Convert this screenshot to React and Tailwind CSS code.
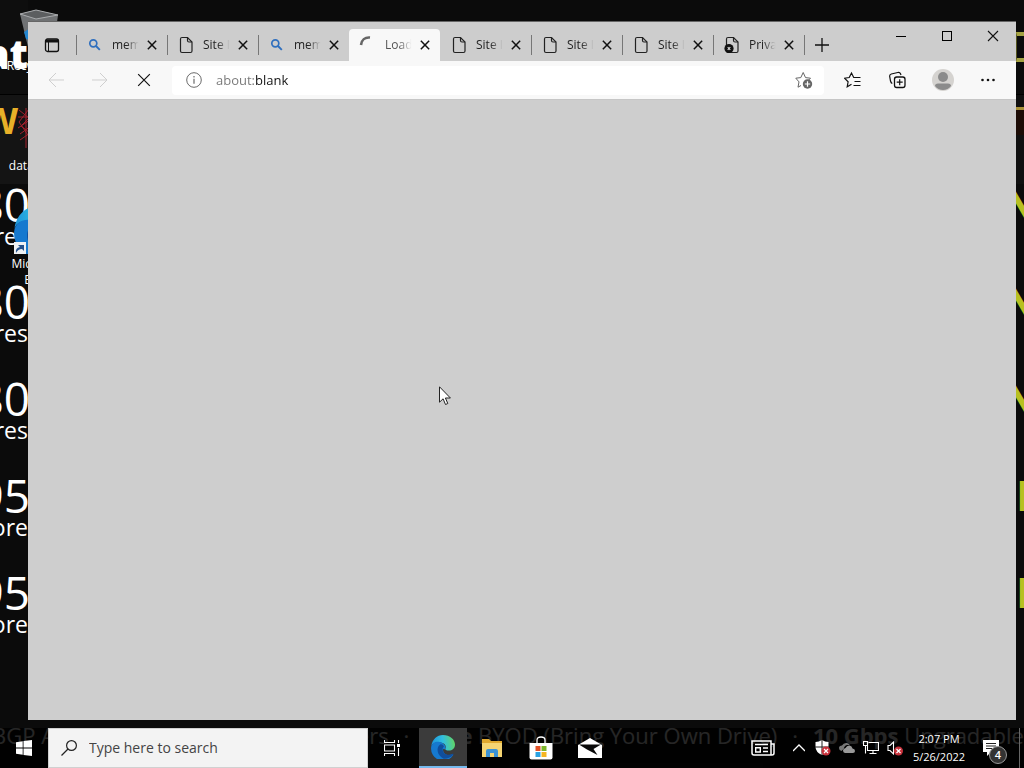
import { useState } from 'react';

const initialTabs = [
    { id: 1, title: 'memz', icon: 'search' },
    { id: 2, title: 'Site Map', icon: 'page' },
    { id: 3, title: 'memz', icon: 'search' },
    { id: 4, title: 'Loading', icon: 'loading' },
    { id: 5, title: 'Site I', icon: 'page' },
    { id: 6, title: 'Site I', icon: 'page' },
    { id: 7, title: 'Site I', icon: 'page' },
    { id: 8, title: 'Privacy', icon: 'blocked' },
];

const plans = [
    { id: 1, price: '80', unit: 'Cores', badge: 'justify-center' },
    { id: 2, price: '80', unit: 'Cores', badge: 'justify-center' },
    { id: 3, price: '80', unit: 'Cores', badge: 'justify-center' },
    { id: 4, price: '95', unit: 'Core', badge: 'justify-start' },
    { id: 5, price: '95', unit: 'Core', badge: 'justify-start' },
];

const Svg = ({ className = 'w-4 h-4', box = '0 0 16 16', children }) => (
    <svg className={className} viewBox={box} fill="none" stroke="currentColor" aria-hidden="true">
        {children}
    </svg>
);

const Cross = ({ className, width = 1.2 }) => (
    <Svg className={className} box="0 0 12 12">
        <path d="M1 1l10 10M11 1L1 11" strokeWidth={width} />
    </Svg>
);

const TabIcon = ({ name }) => {
    if (name === 'search') {
        return (
            <Svg className="w-4 h-4 text-[#2f6fbe]">
                <circle cx="5.3" cy="6.3" r="3.5" strokeWidth="1.7" />
                <path d="M8 9l3.8 3.8" strokeWidth="1.9" />
            </Svg>
        );
    }
    if (name === 'loading') {
        return (
            <Svg className="w-4 h-4 overflow-visible text-[#666]">
                <path d="M0 8C.5 3 4 0 9 .5" strokeWidth="2.6" />
            </Svg>
        );
    }
    return (
        <Svg className="w-4 h-4 overflow-visible text-[#222]">
            <path d="M3 .5h5.500l4.500 4.500v9q0 1.500-1.500 1.500h-8.500q-1.500 0-1.500-1.500v-12q0-1.500 1.500-1.500z" strokeWidth="1.200" />
            <path d="M8.500 .5v3q0 1.500 1.500 1.500h3" strokeWidth="1.200" />
            {name === 'blocked' && (
                <>
                    <circle cx="4" cy="11.500" r="4.600" fill="#111" stroke="none" />
                    <path d="M2.700 10.200l2.600 2.600M5.300 10.200l-2.600 2.600" stroke="#ddd" strokeWidth="1.100" />
                </>
            )}
        </Svg>
    );
};

const Wallpaper = () => (
    <div className="absolute inset-0 flex flex-col overflow-hidden text-white" aria-hidden="true">
        <div className="flex flex-1 min-h-0 justify-between">
            <div className="w-7 overflow-hidden">
                <div className="flex h-[95px] items-end justify-end border-b border-black bg-[#0e0e0e] pb-5 text-[40px] font-extrabold leading-10">
                    <span>at</span>
                </div>
                <div className="flex h-[89px] justify-end bg-[#141414] pt-1.5 pr-2.5 text-[36px] font-bold leading-10 text-[#e8b028]">
                    <span>W</span>
                </div>
                {plans.map((plan) => (
                    <div key={plan.id} className="-mr-0.5 flex h-[97px] flex-col items-end">
                        <span className="text-[46px] leading-10">{plan.price}</span>
                        <span className="pr-0.5 text-[23px] leading-6">{plan.unit}</span>
                    </div>
                ))}
            </div>
            <div className="w-2 overflow-hidden">
                <div className="h-[95px] border-b border-black pt-8">
                    <div className="h-[30px] w-full border-y-4 border-l border-y-[#a5a242] border-l-[#55551f]"></div>
                </div>
                <div className="h-[89px] bg-[#101010] pt-3">
                    <div className="h-7 w-full border-t-3 border-[#a89038] bg-[#1c0c06]"></div>
                </div>
                {plans.map((plan) => (
                    <div key={plan.id} className={`flex h-[97px] text-[42px] font-bold leading-10 text-[#b7c021] ${plan.badge}`}>
                        <span>N</span>
                    </div>
                ))}
            </div>
        </div>
        <div className="-ml-2 flex h-[50px] items-center justify-between pb-4 text-[22px] leading-8 whitespace-nowrap">
            <span>BGP Available</span>
            <span>·</span>
            <span><b>All</b> Dedicated Servers</span>
            <span>·</span>
            <span><b>Free</b> BYOD (Bring Your Own Drive)</span>
            <span>·</span>
            <span><b>10 Gbps</b> Upgradable</span>
        </div>
    </div>
);

const DesktopIcons = () => (
    <div className="absolute top-2 left-0 flex w-[76px] flex-col items-center text-center text-xs leading-4 text-white">
        <svg className="h-12 w-12" viewBox="0 0 48 48" aria-hidden="true">
            <path d="M6 6L22 2l22 5-5 37-23 3z" fill="#707274" />
            <path d="M6 6L22 2l22 5-22 4z" fill="#5c5e60" stroke="#a9abad" />
            <path d="M10 24l8-5 2 14-8-2z" fill="#2385cf" />
        </svg>
        <span className="mt-0.5">Recycle Bin</span>
        <svg className="mt-8 h-12 w-12" viewBox="0 0 48 48" fill="none" stroke="#a3202c" aria-hidden="true">
            <path d="M5 4l10 8-8 8 9 7-10 7M15 3L5 16l11 16M4 11h13M4 22l12-8M12 2v40M6 28l11-8" strokeWidth="1" />
        </svg>
        <span className="mt-1">database1</span>
        <div className="relative mt-8 h-12 w-12">
            <EdgeLogo className="h-12 w-12" />
            <svg className="absolute bottom-0 left-0 h-3 w-3" viewBox="0 0 12 12" aria-hidden="true">
                <path d="M0 0h12v12H0z" fill="#eef1f4" />
                <path d="M2 11q-1-5 4-6l-2-2h6v6l-2-2q-4 0-6 4z" fill="#24518c" />
            </svg>
        </div>
        <span className="mt-0.5">Microsoft Edge</span>
    </div>
);

const EdgeLogo = ({ className }) => (
    <svg className={className} viewBox="0 0 24 24" aria-hidden="true">
        <defs>
            <linearGradient id="edgeTop" x1="0" y1="0.5" x2="1" y2="0.4">
                <stop offset="0" stopColor="#1d94dc" />
                <stop offset="0.5" stopColor="#31bde0" />
                <stop offset="1" stopColor="#62d663" />
            </linearGradient>
        </defs>
        <path d="M.3 11C1.200 4.500 6 0 12 0c7 0 12 4.500 12 9.600 0 4-3 6-6 6-2.700 0-4-.9-3.700-1.800.8-1 .9-4.300-2.300-5.600C8 6.500 2 7 .3 11z" fill="url(#edgeTop)" />
        <path d="M.1 12.500C.5 8 5 6.200 8.500 7c4 .8 6.200 3.500 5.900 5.900-.3 1.600-.3 1.500-2.400 1.100-.2 5 4.500 7.500 8.500 5.600 1.300-.7 2.200-.1 1.400.9A12 12 0 0 1 .1 12.500z" fill="#1679cf" />
        <path d="M9.200 9.500c-4.500 2.800-3.200 11.200 3.500 14.200 4.400 0 8-1.500 9.700-4.200.3-.7-.2-1-.9-.7-4.500 2.400-9.300.2-9.800-3.800-.2-2 .3-2.500 1.200-3.300-.7-1.800-2-2.700-3.700-2.200z" fill="#104e9c" />
    </svg>
);

const Browser = () => {
    const [activeTab, setActiveTab] = useState(4);
    const [url, setUrl] = useState('about:blank');
    const toolButton = 'flex w-11 h-8 items-center justify-center';

    return (
        <section className="absolute top-[21px] right-2 bottom-12 left-7 flex flex-col border-t border-[#666] bg-[#cecece] text-[#111]">
            {/* Tab strip */}
            <div className="flex h-[39px] shrink-0 items-end bg-[#cdcdcd]">
                <button className="flex h-8 w-12 items-center justify-center" aria-label="Tab actions">
                    <Svg className="w-4 h-4">
                        <rect x="1.500" y="2" width="13" height="12.500" rx="2" strokeWidth="1.300" />
                        <path d="M2 4h12" strokeWidth="3" />
                        <path d="M4.500 4v10" />
                    </Svg>
                </button>
                {initialTabs.map((tab) => {
                    const active = tab.id === activeTab;
                    return (
                        <div
                            key={tab.id}
                            className={`relative flex h-8 w-[91px] items-center pl-3 ${active ? 'rounded-t bg-[#f8f8f8]' : ''}`}
                        >
                            {!active && tab.id !== activeTab + 1 && (
                                <span className="absolute top-1.5 left-0 h-5 w-px bg-[#777]"></span>
                            )}
                            <button className="flex items-center gap-2" onClick={() => setActiveTab(tab.id)}>
                                <TabIcon name={tab.icon} />
                                <span
                                    className={`w-7 overflow-hidden text-left text-xs leading-4 whitespace-nowrap [mask-image:linear-gradient(to_right,#000_50%,transparent_95%)] ${active ? 'text-[#555]' : 'text-[#222]'}`}
                                >
                                    {tab.title}
                                </span>
                            </button>
                            <button className="flex h-5 w-6 items-center justify-center" aria-label="Close tab">
                                <Cross className="w-2.5 h-2.5" width={1.8} />
                            </button>
                        </div>
                    );
                })}
                <button className="relative flex h-8 w-9 items-center justify-center" aria-label="New tab">
                    <span className="absolute top-1.5 left-0 h-5 w-px bg-[#777]"></span>
                    <Svg className="w-4 h-4">
                        <path d="M8 1v14M1 8h14" strokeWidth="1.300" />
                    </Svg>
                </button>
                <div className="ml-auto flex self-start">
                    <button className="flex h-7 w-[46px] items-center justify-center" aria-label="Minimize">
                        <span className="h-px w-2.5 bg-black"></span>
                    </button>
                    <button className="flex h-7 w-[46px] items-center justify-center" aria-label="Maximize">
                        <span className="h-2.5 w-2.5 border border-black"></span>
                    </button>
                    <button className="flex h-7 w-[46px] items-center justify-center" aria-label="Close">
                        <Cross className="w-3 h-3" width={1.1} />
                    </button>
                </div>
            </div>

            {/* Toolbar */}
            <div className="flex h-[38px] shrink-0 items-center gap-1.5 bg-[#f8f8f8] px-1.5">
                <div className="flex">
                    <button className={`${toolButton} text-[#cfcfcf]`} aria-label="Back">
                        <Svg><path d="M16 8H1M8 1L1 8l7 7" /></Svg>
                    </button>
                    <button className={`${toolButton} text-[#cfcfcf]`} aria-label="Forward">
                        <Svg><path d="M0 8h15M8 1l7 7-7 7" /></Svg>
                    </button>
                    <button className={toolButton} aria-label="Stop">
                        <Cross className="w-3.5 h-3.5" width={1} />
                    </button>
                </div>
                <div className="flex h-[29px] flex-1 items-center rounded-sm bg-white">
                    <div className="flex w-11 justify-center text-[#6b6b6b]">
                        <Svg>
                            <circle cx="8" cy="8" r="7.300" />
                            <path d="M8 6.800v5M8 4v1.400" strokeWidth="1.200" />
                        </Svg>
                    </div>
                    <input
                        className="min-w-0 flex-1 bg-[linear-gradient(to_right,#767676_40px,#111_40px)] bg-clip-text text-[13px] leading-5 text-transparent outline-none"
                        aria-label="Address"
                        value={url}
                        onChange={(e) => setUrl(e.target.value)}
                    />
                    <button className="flex w-10 justify-center text-[#666]" aria-label="Add to favorites">
                        <Svg className="w-[18px] h-[18px]" box="0 0 18 18">
                            <path d="M6 14.500l-3 1.700 1-5.300L.8 7.200l5-.6L8.200 1.500l2.300 5.100 5 .6-2 2" />
                            <circle cx="12.500" cy="13" r="4.700" fill="#666" stroke="none" />
                            <path d="M12.500 10.300v5.400M9.800 13h5.400" stroke="#fff" strokeWidth="1.200" />
                        </Svg>
                    </button>
                </div>
                <div className="flex">
                    <button className="flex h-8 w-[45px] items-center justify-center" aria-label="Favorites">
                        <Svg className="w-[18px] h-[18px]" box="0 0 18 18">
                            <path d="M7.500 13.200l-4.300 2.600.9-5L.5 7.200l4.700-.7L7.500 2l2.200 4.500h6.800M10.500 10.500h6M9.500 14.500h7" strokeWidth="1.200" />
                        </Svg>
                    </button>
                    <button className="flex h-8 w-[45px] items-center justify-center" aria-label="Collections">
                        <Svg className="w-[18px] h-[18px]" box="0 0 18 18">
                            <rect x="5.500" y="6" width="10.500" height="10.500" rx="2.200" strokeWidth="1.300" />
                            <path d="M10.700 8.200v6M7.700 11.200h6M3.300 12.500Q2 12 1.500 10L.7 5.500Q.4 3.500 2.300 3l6.500-1.500q2-.4 2.700 1.200L12 4" strokeWidth="1.200" />
                        </Svg>
                    </button>
                    <button className="flex h-8 w-[45px] items-center justify-center" aria-label="Profile">
                        <svg className="h-[22px] w-[22px]" viewBox="0 0 22 22" aria-hidden="true">
                            <circle cx="11" cy="11" r="11" fill="#d5d3d0" />
                            <circle cx="11" cy="8" r="5" fill="#8b8b8b" />
                            <path d="M3 17q0-2.500 3-2.500h10q3 0 3 2.500-3 4-8 4t-8-4z" fill="#8b8b8b" />
                        </svg>
                    </button>
                    <button className="flex h-8 w-[45px] items-center justify-center" aria-label="Settings and more">
                        <Svg>
                            <g fill="currentColor" stroke="none">
                                <circle cx="2.500" cy="8" r="1.300" />
                                <circle cx="8" cy="8" r="1.300" />
                                <circle cx="13.500" cy="8" r="1.300" />
                            </g>
                        </Svg>
                    </button>
                </div>
            </div>
            <main className="flex-1 border-t border-[#c6c6c6]"></main>
        </section>
    );
};

const ErrorBadge = ({ x, y }) => (
    <>
        <circle cx={x} cy={y} r="4.500" fill="#c8323c" stroke="none" />
        <path d={`M${x - 2} ${y - 2}l4 4M${x + 2} ${y - 2}l-4 4`} stroke="#fff" strokeWidth="1.200" />
    </>
);

const Taskbar = () => {
    const app = 'flex w-[49px] items-center justify-center';
    const tray = 'flex w-6 items-center justify-center';

    return (
        <footer className="absolute inset-x-0 bottom-0 flex h-10 bg-black/85 text-white">
            <button className="flex w-12 items-center justify-center" aria-label="Start">
                <svg className="h-4 w-4" viewBox="0 0 16 16" fill="#fff" aria-hidden="true">
                    <path d="M0 2.200L6.700 1.200V7.600H0zM7.500 1.100L16 0v7.600H7.500zM0 8.400h6.700v6.400L0 13.800zM7.500 8.400H16V16l-8.500-1.100z" />
                </svg>
            </button>
            <label className="flex w-80 items-center border border-[#d0d0d0] bg-[#f3f3f3] pl-3 text-[#222]">
                <Svg className="w-4 h-4">
                    <circle cx="10.500" cy="5.500" r="4.900" strokeWidth="1.200" />
                    <path d="M7 9L.5 15.500" strokeWidth="1.200" />
                </Svg>
                <input
                    className="ml-3 min-w-0 flex-1 text-sm outline-none placeholder:text-[#444]"
                    placeholder="Type here to search"
                    aria-label="Search"
                />
            </label>
            <button className="flex w-[51px] items-center justify-center pr-1" aria-label="Task view">
                <Svg className="w-4 h-4">
                    <path d="M.5 0v2.500h10V0M.5 16v-2.500h10V16M.5 5h10v6H.5zM14.500 0v3M14.500 8v8" strokeWidth="1.100" />
                    <path d="M13 4h3v3h-3z" fill="#fff" stroke="none" />
                </Svg>
            </button>
            <button className="flex w-12 items-center justify-center border-b-2 border-[#76b9ed] bg-[#3b3b3b]" aria-label="Microsoft Edge">
                <EdgeLogo className="h-6 w-6" />
            </button>
            <button className={app} aria-label="File Explorer">
                <svg className="h-[22px] w-[22px]" viewBox="0 0 22 22" aria-hidden="true">
                    <path d="M1 2h7l2 2h11v16H1z" fill="#e0a92f" />
                    <path d="M1 6h20v14H1z" fill="#f5d573" />
                    <path d="M5 20v-6q0-2 2-2h8q2 0 2 2v6h-4v-4H9v4z" fill="#3c93d4" />
                </svg>
            </button>
            <button className={app} aria-label="Microsoft Store">
                <svg className="h-6 w-6" viewBox="0 0 24 24" aria-hidden="true">
                    <path d="M8 8V4q0-3 4-3t4 3v4" fill="none" stroke="#fff" strokeWidth="1.300" />
                    <path d="M.5 7h23v14.500q0 2-2 2h-19q-2 0-2-2z" fill="#fff" />
                    <path d="M6.500 10h5v5h-5z" fill="#e25127" />
                    <path d="M12.500 10h5v5h-5z" fill="#7cb52b" />
                    <path d="M6.500 16h5v5h-5z" fill="#2aa2e2" />
                    <path d="M12.500 16h5v5h-5z" fill="#f5b522" />
                </svg>
            </button>
            <button className={app} aria-label="Mail">
                <svg className="h-5 w-6" viewBox="0 0 24 20" aria-hidden="true">
                    <path d="M0 7l12-7 12 7v13H0z" fill="#fff" />
                    <path d="M1 6.500h22l-7.500 4.500 4 6L9 11.500z" fill="#0a0a0a" />
                </svg>
            </button>

            {/* Tray */}
            <div className="ml-auto flex">
                <button className="flex w-12 items-center justify-center" aria-label="News">
                    <Svg className="h-4 w-6" box="0 0 24 16">
                        <path d="M1 1h19v14H3q-2 0-2-2zM20 4h3v9q0 2-2 2h-2" strokeWidth="1.500" />
                        <path d="M4 4.500h13M12 8h5M12 11.500h5M4.700 7.700h4.600v4.300H4.700z" strokeWidth="1.400" />
                    </Svg>
                </button>
                <button className={tray} aria-label="Show hidden icons">
                    <Svg className="h-3 w-3" box="0 0 12 12"><path d="M0 9l6-6 6 6" strokeWidth="1.300" /></Svg>
                </button>
                <button className={tray} aria-label="Security">
                    <Svg>
                        <path d="M7 0q3 2 6.500 2v5q0 5-6.500 8Q.5 12 .5 7V2Q4 2 7 0z" fill="#fff" stroke="none" />
                        <path d="M7 0v15M0 7h14" stroke="#222" />
                        <ErrorBadge x={11} y={11} />
                    </Svg>
                </button>
                <button className={tray} aria-label="OneDrive">
                    <Svg>
                        <path d="M2.500 11Q0 10.500 0 8t3-2.500Q4.500 2.500 8 3q2 .5 2.800 2H8Q5 6 5 8.500L2.500 11z" fill="#777" stroke="none" />
                        <path d="M6 13q-2-.5-2-2.500T6.500 8Q8 5.200 10.500 5.500t3 3Q16 8.800 16 11t-2.500 2z" fill="#999" stroke="none" />
                    </Svg>
                </button>
                <button className={tray} aria-label="Network">
                    <Svg>
                        <path d="M5.500 2.500h10v8H4.500V6M10 10.500v3M6.500 13.500h7M.5 1.500h4v4h-4zM2.500 5.500v8" strokeWidth="1.100" />
                    </Svg>
                </button>
                <button className={tray} aria-label="Volume">
                    <Svg>
                        <path d="M1 5.500h2L6.500 2v12L3 10.500H1z" strokeWidth="1.100" />
                        <ErrorBadge x={11.5} y={11} />
                    </Svg>
                </button>
                <button className="flex w-16 flex-col items-center justify-center text-[11px] leading-[18px]">
                    <span>2:07 PM</span>
                    <span>5/26/2022</span>
                </button>
                <button className="relative flex w-12 items-center pl-3" aria-label="Notifications">
                    <svg className="h-4 w-4" viewBox="0 0 16 16" aria-hidden="true">
                        <path d="M0 0h16v12H8l-4 4v-4H0z" fill="#fff" />
                        <path d="M3 3.500h10M3 6h10M3 8.500h6" stroke="#222" />
                    </svg>
                    <span className="absolute right-3 bottom-1 flex h-[18px] w-[18px] items-center justify-center rounded-full border border-[#999] bg-[#333] text-[11px] leading-3 font-semibold">4</span>
                </button>
                <button className="w-[5px] border-l border-[#666]" aria-label="Show desktop"></button>
            </div>
        </footer>
    );
};

export default function App() {
    return (
        <div className="relative h-screen min-h-96 overflow-hidden bg-[#0b0b0b] font-['Open_Sans','Noto_Sans',sans-serif]">
            <Wallpaper />
            <DesktopIcons />
            <Browser />
            <Taskbar />
            <svg className="pointer-events-none absolute top-[386px] left-[439px] h-5 w-3" viewBox="0 0 12 20" aria-hidden="true">
                <path d="M.5 .8v15.400l3.600-3.400 2.400 5.700 2.300-1-2.400-5.500h5z" fill="#fff" stroke="#222" />
            </svg>
        </div>
    );
}
